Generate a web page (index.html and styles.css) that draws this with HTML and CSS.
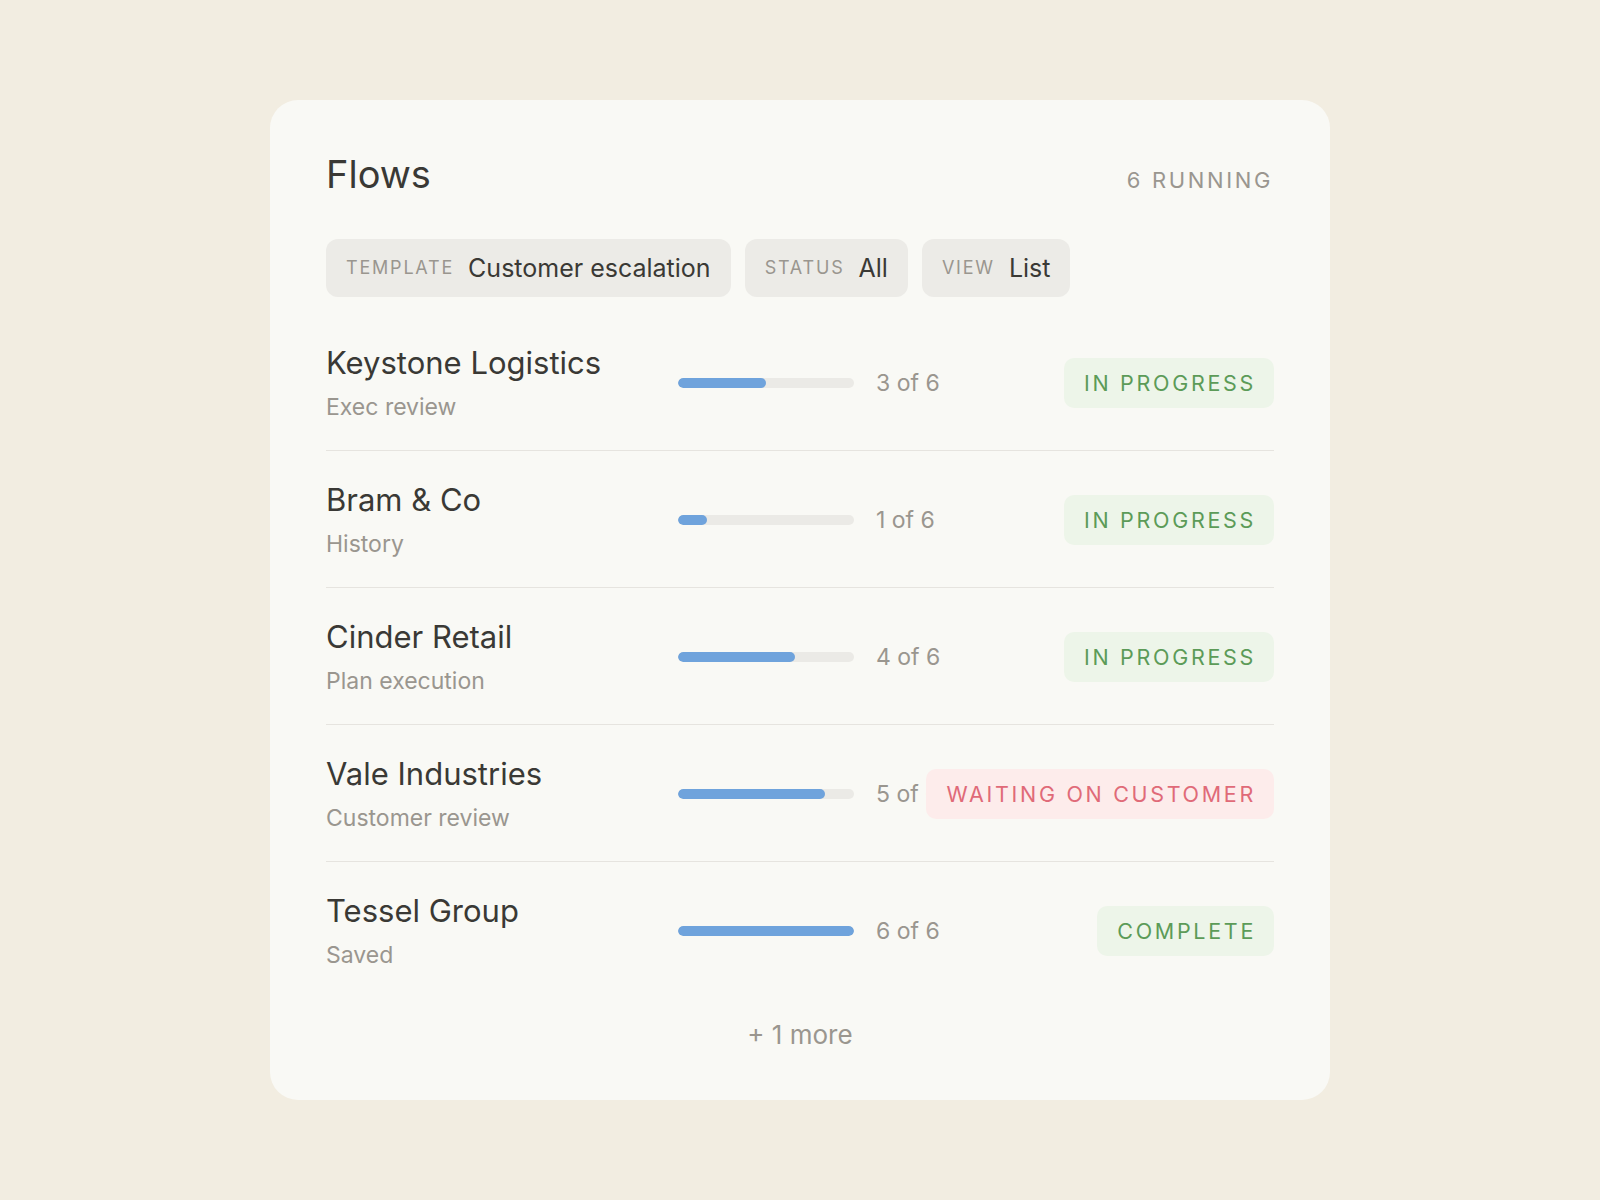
FILE: index.html
```html
<!DOCTYPE html>
<html lang="en">
<head>
<meta charset="utf-8">
<title>Flows</title>
<link rel="stylesheet" href="styles.css">
</head>
<body>
<main class="card">
  <header class="head">
    <h1 class="title">Flows</h1>
    <span class="running">6 RUNNING</span>
  </header>
  <div class="filters">
    <div class="chip"><span class="chip-label">TEMPLATE</span><span class="chip-value">Customer escalation</span></div>
    <div class="chip"><span class="chip-label">STATUS</span><span class="chip-value">All</span></div>
    <div class="chip"><span class="chip-label">VIEW</span><span class="chip-value">List</span></div>
  </div>
  <ul class="rows">
    <li class="row">
      <div class="who"><div class="name">Keystone Logistics</div><div class="sub">Exec review</div></div>
      <div class="bar"><div class="fill" style="width:50%"></div></div>
      <div class="count">3 of 6</div>
      <div class="badge green">IN PROGRESS</div>
    </li>
    <li class="row">
      <div class="who"><div class="name">Bram &amp; Co</div><div class="sub">History</div></div>
      <div class="bar"><div class="fill" style="width:16.67%"></div></div>
      <div class="count">1 of 6</div>
      <div class="badge green">IN PROGRESS</div>
    </li>
    <li class="row">
      <div class="who"><div class="name">Cinder Retail</div><div class="sub">Plan execution</div></div>
      <div class="bar"><div class="fill" style="width:66.67%"></div></div>
      <div class="count">4 of 6</div>
      <div class="badge green">IN PROGRESS</div>
    </li>
    <li class="row">
      <div class="who"><div class="name">Vale Industries</div><div class="sub">Customer review</div></div>
      <div class="bar"><div class="fill" style="width:83.33%"></div></div>
      <div class="count">5 of 6</div>
      <div class="badge red">WAITING ON CUSTOMER</div>
    </li>
    <li class="row">
      <div class="who"><div class="name">Tessel Group</div><div class="sub">Saved</div></div>
      <div class="bar"><div class="fill" style="width:100%"></div></div>
      <div class="count">6 of 6</div>
      <div class="badge green">COMPLETE</div>
    </li>
  </ul>
  <div class="more">+ 1 more</div>
</main>
</body>
</html>
```

FILE: styles.css
```css
* { box-sizing: border-box; }
html, body { margin: 0; padding: 0; }
body {
  background: #f2ede1;
  font-family: Inter, "Noto Sans", "DejaVu Sans", sans-serif;
  color: #3a3935;
  min-height: 1200px;
  padding-top: 100px;
}
.card {
  width: 1060px;
  height: 1000px;
  margin: 0 auto;
  background: #f9f9f5;
  border-radius: 28px;
  padding: 52px 56px 0 56px;
}
.head {
  display: flex;
  justify-content: space-between;
  align-items: baseline;
}
.title {
  margin: 0;
  font-size: 38px;
  font-weight: 400;
  line-height: 1.2;
  color: #3a3935;
}
.running {
  font-size: 22px;
  letter-spacing: 0.12em;
  color: #9a968f;
  margin-right: 1px;
}
.filters {
  display: flex;
  gap: 14px;
  margin-top: 41px;
}
.chip {
  height: 58px;
  display: flex;
  align-items: center;
  gap: 14px;
  padding: 0 20px;
  background: #ecebe7;
  border-radius: 12px;
}
.chip-label {
  font-size: 18px;
  letter-spacing: 0.1em;
  color: #9a968f;
}
.chip-value {
  font-size: 25px;
  color: #3a3935;
}
.rows {
  list-style: none;
  margin: 17px 0 0 0;
  padding: 0;
}
.row {
  display: flex;
  align-items: center;
  padding: 31px 0 28px 0;
  border-bottom: 1px solid #e6e4df;
}
.row:last-child { border-bottom: none; }
.who {
  width: 352px;
  flex-shrink: 0;
}
.name {
  font-size: 31px;
  line-height: 36px;
  color: #3a3935;
}
.sub {
  margin-top: 11px;
  font-size: 23px;
  line-height: 30px;
  color: #9a968f;
}
.bar {
  width: 176px;
  height: 10px;
  flex-shrink: 0;
  border-radius: 5px;
  background: #ebeae6;
  overflow: hidden;
}
.fill {
  height: 100%;
  background: #6fa3dc;
  border-radius: 5px;
}
.count {
  flex: 1 1 0;
  min-width: 0;
  margin-left: 22px;
  white-space: nowrap;
  font-size: 23px;
  color: #9a968f;
}
.badge {
  flex-shrink: 0;
  height: 50px;
  display: flex;
  align-items: center;
  padding: 0 18px 0 20px;
  border-radius: 10px;
  font-size: 21.5px;
  letter-spacing: 0.125em;
  white-space: nowrap;
}
.badge.green { background: #edf5e9; color: #5c9b58; }
.badge.red { background: #fdeceb; color: #e06a78; }
.more {
  margin-top: 21px;
  text-align: center;
  font-size: 26px;
  line-height: 32px;
  color: #9a968f;
}
```
